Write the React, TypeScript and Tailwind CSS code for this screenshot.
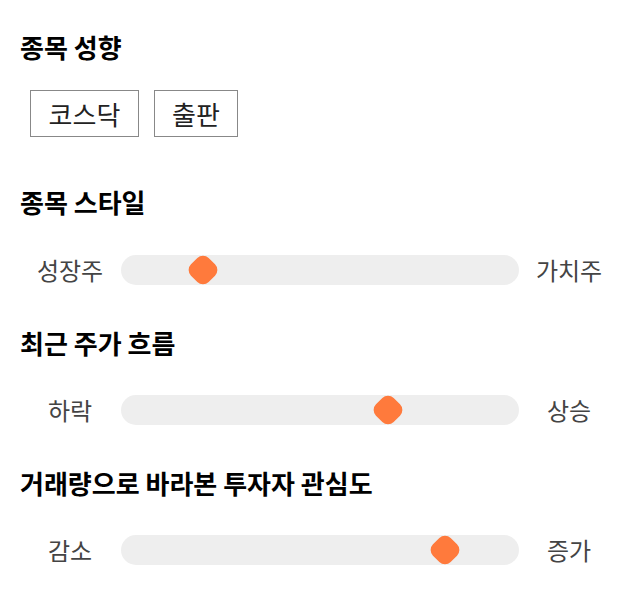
import React from "react";

const FONT = { fontFamily: '"Noto Sans CJK KR", "Noto Sans", sans-serif' };

function Slider({ left, right, value }: { left: string; right: string; value: number }) {
  return (
    <div className="flex items-center h-[30px]">
      <div className="w-[100px] text-center text-[24px] text-[#444]">{left}</div>
      <div className="relative w-[398px] h-[30px] rounded-full bg-[#eeeeee] ml-[1px]">
        {/* thumb */}
        <div
          className="absolute top-1/2 w-[25px] h-[25px] rounded-[8px] bg-[#ff7a3c] -translate-x-1/2 -translate-y-1/2 rotate-45"
          style={{ left: `${value * 100}%` }}
        />
      </div>
      <div className="w-[100px] text-center text-[24px] text-[#444]">{right}</div>
    </div>
  );
}

export default function App() {
  return (
    <div className="w-[640px] h-[606px] bg-white px-5 pt-[30px]" style={FONT}>
      <h2 className="text-[26px] font-bold text-black leading-[34px]">종목 성향</h2>
      <div className="flex gap-[15px] mt-[26px] ml-[10px]">
        <button className="w-[109px] h-[47px] border border-[#888] text-[26px] text-[#222] leading-none">코스닥</button>
        <button className="w-[84px] h-[47px] border border-[#888] text-[26px] text-[#222] leading-none">출판</button>
      </div>

      <h2 className="text-[26px] font-bold text-black leading-[34px] mt-[48px]">종목 스타일</h2>
      <div className="mt-[36px]">
        <Slider left="성장주" right="가치주" value={0.206} />
      </div>

      <h2 className="text-[26px] font-bold text-black leading-[34px] mt-[41px]">최근 주가 흐름</h2>
      <div className="mt-[35px]">
        <Slider left="하락" right="상승" value={0.67} />
      </div>

      <h2 className="text-[26px] font-bold text-black leading-[34px] mt-[41px]">거래량으로 바라본 투자자 관심도</h2>
      <div className="mt-[35px]">
        <Slider left="감소" right="증가" value={0.814} />
      </div>
    </div>
  );
}
